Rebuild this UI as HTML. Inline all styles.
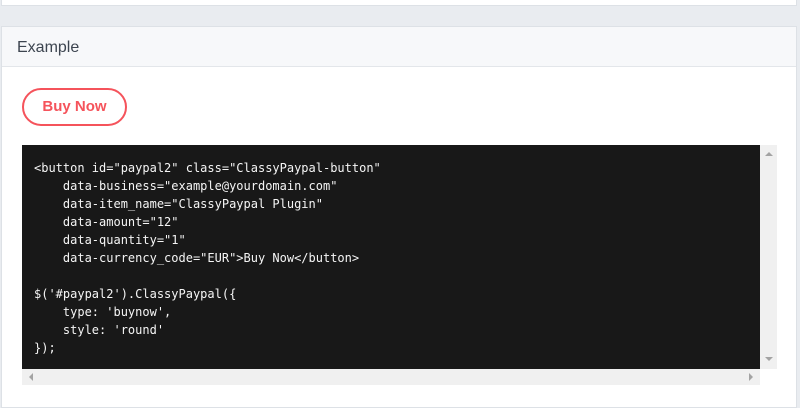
<!DOCTYPE html>
<html><head><meta charset="utf-8"><style>
html,body{margin:0;padding:0;width:800px;height:400px;overflow:hidden;background:#e9ecf0;font-family:"Liberation Sans",sans-serif}
.top{position:absolute;left:1px;top:-2px;width:794px;height:6px;background:#fff;border:1px solid #dde1e6}
.card{position:absolute;left:1px;top:26px;width:794px;height:380px;background:#fff;border:1px solid #dde1e6}
.hd{height:39px;background:#f7f8fa;border-bottom:1px solid #e3e6ea;font-size:16px;color:#3d4550;line-height:41px;padding-left:15px}
.btn{position:absolute;left:20px;top:61px;width:101px;height:34px;border:2px solid #f5535b;border-radius:20px;color:#f5535b;font-weight:bold;font-size:15px;line-height:34px;text-align:center}
.code{position:absolute;left:20px;top:118px;width:738px;height:224px;background:#181818;overflow:hidden}
pre{margin:0;padding:14px 0 0 12px;font-family:"DejaVu Sans Mono","Liberation Mono",monospace;font-size:12px;line-height:18px;color:#f5f5f5}
.vs{position:absolute;left:758px;top:118px;width:17px;height:224px;background:#f0f0f0}
.hs{position:absolute;left:20px;top:342px;width:738px;height:16px;background:#f0f0f0}
.tri{position:absolute;width:0;height:0}
</style></head><body>
<div class="top"></div>
<div class="card">
<div class="hd">Example</div>
<div class="btn">Buy Now</div>
<div class="code"><pre>&lt;button id="paypal2" class="ClassyPaypal-button"
    data-business="example@yourdomain.com"
    data-item_name="ClassyPaypal Plugin"
    data-amount="12"
    data-quantity="1"
    data-currency_code="EUR"&gt;Buy Now&lt;/button&gt;

$('#paypal2').ClassyPaypal({
    type: 'buynow',
    style: 'round'
});</pre></div>
<div class="vs">
<div class="tri" style="left:5px;top:7px;border-left:4px solid transparent;border-right:4px solid transparent;border-bottom:4px solid #a3a3a3"></div>
<div class="tri" style="left:5px;top:212px;border-left:4px solid transparent;border-right:4px solid transparent;border-top:4px solid #a3a3a3"></div>
</div>
<div class="hs">
<div class="tri" style="left:7px;top:4px;border-top:4px solid transparent;border-bottom:4px solid transparent;border-right:4px solid #a3a3a3"></div>
<div class="tri" style="left:727px;top:4px;border-top:4px solid transparent;border-bottom:4px solid transparent;border-left:4px solid #a3a3a3"></div>
</div>
</div>
</body></html>
